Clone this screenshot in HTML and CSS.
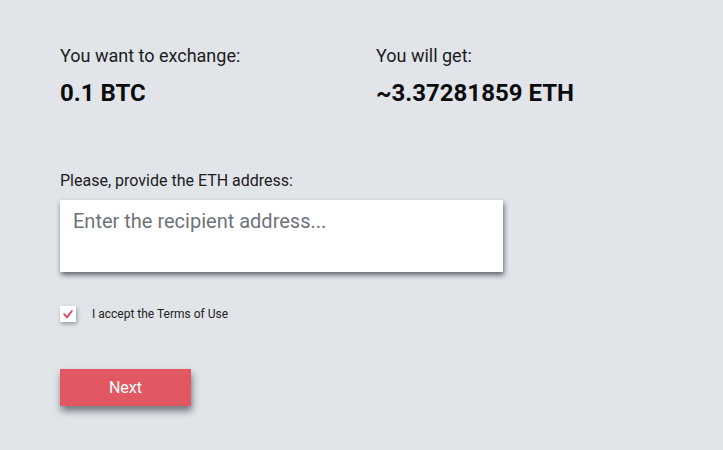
FILE: index.html
```html
<!DOCTYPE html>
<html>
<head>
<meta charset="utf-8">
<link rel="stylesheet" href="styles.css">
</head>
<body>
<main class="page">
  <section class="summary">
    <div class="col">
      <div class="label">You want to exchange:</div>
      <div class="value">0.1 BTC</div>
    </div>
    <div class="col">
      <div class="label">You will get:</div>
      <div class="value">~3.37281859 ETH</div>
    </div>
  </section>
  <section class="address">
    <label class="field-label" for="addr">Please, provide the ETH address:</label>
    <textarea id="addr" class="addr-input" placeholder="Enter the recipient address..."></textarea>
  </section>
  <label class="terms">
    <span class="check"><svg width="10" height="9" viewBox="0 0 10 9"><path d="M1.2 4.2 L4 7.4 L8.8 1" fill="none" stroke="#d9475a" stroke-width="1.8" stroke-linecap="round" stroke-linejoin="round"/></svg></span>
    <span class="terms-text">I accept the Terms of Use</span>
  </label>
  <div class="actions">
    <button class="next">Next</button>
  </div>
</main>
</body>
</html>
```
FILE: styles.css
```css
html, body {
  margin: 0;
  padding: 0;
  background: #e1e4e9;
  font-family: Roboto, "Liberation Sans", sans-serif;
  color: #111;
}
.page {
  padding: 44px 0 40px 60px;
  display: flex;
  flex-direction: column;
  align-items: flex-start;
}
.summary {
  display: flex;
}
.col {
  width: 316px;
}
.label {
  font-size: 18px;
  line-height: 24px;
  color: #1c1c1c;
}
.value {
  font-size: 24px;
  font-weight: 700;
  line-height: 28px;
  margin-top: 11px;
  color: #0c0c0c;
}
.address {
  margin-top: 64px;
  display: flex;
  flex-direction: column;
}
.field-label {
  font-size: 16px;
  line-height: 20px;
  color: #1c1c1c;
}
.addr-input {
  margin-top: 9px;
  width: 443px;
  height: 72px;
  box-sizing: border-box;
  border: none;
  outline: none;
  resize: none;
  padding: 9px 13px;
  font-family: Roboto, "Liberation Sans", sans-serif;
  font-size: 20px;
  line-height: 24px;
  background: #fff;
  box-shadow: 1px 3px 5px rgba(40, 45, 55, 0.7);
}
.addr-input::placeholder {
  color: #6e737b;
}
.terms {
  margin-top: 34px;
  display: flex;
  align-items: center;
  gap: 16px;
}
.check {
  width: 16px;
  height: 16px;
  background: #fff;
  display: flex;
  align-items: center;
  justify-content: center;
  box-shadow: 1px 2px 4px rgba(40, 45, 55, 0.4);
}
.terms-text {
  font-size: 12px;
  color: #222;
}
.actions {
  margin-top: 47px;
}
.next {
  display: block;
  width: 131px;
  height: 37px;
  border: none;
  background: #e25862;
  color: #fff;
  font-family: Roboto, "Liberation Sans", sans-serif;
  font-size: 16px;
  box-shadow: 1px 5px 7px rgba(40, 45, 55, 0.6);
}
```
